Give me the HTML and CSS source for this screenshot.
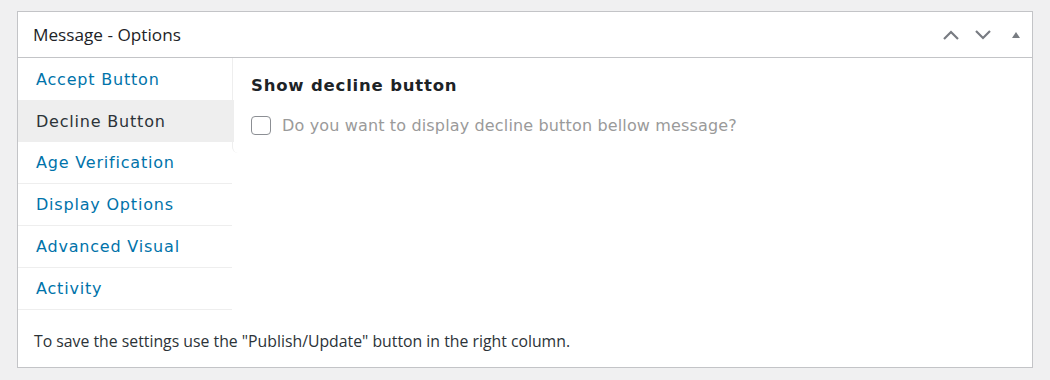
FILE: index.html
```html
<!DOCTYPE html>
<html>
<head>
<meta charset="utf-8">
<link rel="stylesheet" href="styles.css">
</head>
<body>
<div class="postbox">
  <div class="postbox-header">
    <h2 class="title">Message - Options</h2>
    <div class="handles">
      <span class="handle"><svg width="18" height="12" viewBox="0 0 18 12"><path d="M2 10 L9 3 L16 10" fill="none" stroke="#787c82" stroke-width="2.2"/></svg></span>
      <span class="handle"><svg width="18" height="12" viewBox="0 0 18 12"><path d="M2 2 L9 9 L16 2" fill="none" stroke="#787c82" stroke-width="2.2"/></svg></span>
      <span class="handle small"><svg width="10" height="8" viewBox="0 0 10 8"><path d="M1 7 L5 1 L9 7 Z" fill="#787c82"/></svg></span>
    </div>
  </div>
  <div class="inside">
    <div class="tabs-wrap">
      <ul class="tabs">
        <li class="tab">Accept Button</li>
        <li class="tab active">Decline Button</li>
        <li class="tab">Age Verification</li>
        <li class="tab">Display Options</li>
        <li class="tab">Advanced Visual</li>
        <li class="tab">Activity</li>
      </ul>
      <div class="panel">
        <h3 class="panel-title">Show decline button</h3>
        <label class="check-row"><span class="checkbox"></span><span class="check-label">Do you want to display decline button bellow message?</span></label>
      </div>
    </div>
    <p class="note">To save the settings use the "Publish/Update" button in the right column.</p>
  </div>
</div>
</body>
</html>
```

FILE: styles.css
```css
* { box-sizing: border-box; }
html, body { margin: 0; padding: 0; }
body {
  background: #f0f0f1;
  padding: 11px 17px 0 17px;
  width: 1050px;
  height: 380px;
  overflow: hidden;
}
.postbox {
  width: 1016px;
  height: 357px;
  background: #fff;
  border: 1px solid #c3c4c7;
}
.postbox-header {
  height: 46px;
  border-bottom: 1px solid #c3c4c7;
  display: flex;
  align-items: center;
  justify-content: space-between;
  padding: 0 9px 0 15px;
}
.title {
  margin: 0;
  font-family: "Open Sans", "Noto Sans", sans-serif;
  font-weight: 400;
  font-size: 17.2px;
  color: #1d2327;
}
.handles {
  display: flex;
  align-items: center;
  gap: 14px;
}
.handle { display: flex; width: 18px; justify-content: center; }
.handle.small { width: 14px; margin-left: 3px; }
.inside { padding: 0; }
.tabs-wrap {
  display: flex;
  align-items: flex-start;
}
.tabs {
  list-style: none;
  margin: 0;
  padding: 0;
  width: 215px;
  flex: none;
  position: relative;
  z-index: 1;
}
.tab {
  height: 42px;
  border-bottom: 1px solid #eeeeee;
  padding-left: 18px;
  display: flex;
  align-items: center;
  font-family: "DejaVu Sans", Verdana, sans-serif;
  font-size: 16px;
  letter-spacing: 0.8px;
  color: #0073aa;
  margin-right: 1px;
}
.tab:first-child { height: 42px; border-bottom: none; }
.tab.active {
  background: #eeeeee;
  color: #2c3338;
  margin-right: -1px;
  border-bottom: none;
}
.panel {
  flex: 1;
  border-left: 1px solid #eeeeee;
  border-bottom-left-radius: 6px;
  padding: 18px 18px 17px 18px;
  margin-left: -1px;
  min-height: 95px;
}
.panel-title {
  margin: 0 0 20px 0;
  font-family: "DejaVu Sans", Verdana, sans-serif;
  font-weight: 700;
  font-size: 16.5px;
  letter-spacing: 0.8px;
  color: #1d2327;
  line-height: 20px;
}
.check-row {
  display: flex;
  align-items: center;
  gap: 11px;
}
.checkbox {
  width: 20px;
  height: 19px;
  border: 1px solid #8c8f94;
  border-radius: 4px;
  background: #fff;
  flex: none;
}
.check-label {
  font-family: "DejaVu Sans", Verdana, sans-serif;
  font-size: 16px;
  letter-spacing: 0.15px;
  color: #9a9a9a;
}
.note {
  margin: 20px 0 0 16px;
  font-family: "Open Sans", "Noto Sans", sans-serif;
  font-size: 15.8px;
  color: #2c3338;
}
```
